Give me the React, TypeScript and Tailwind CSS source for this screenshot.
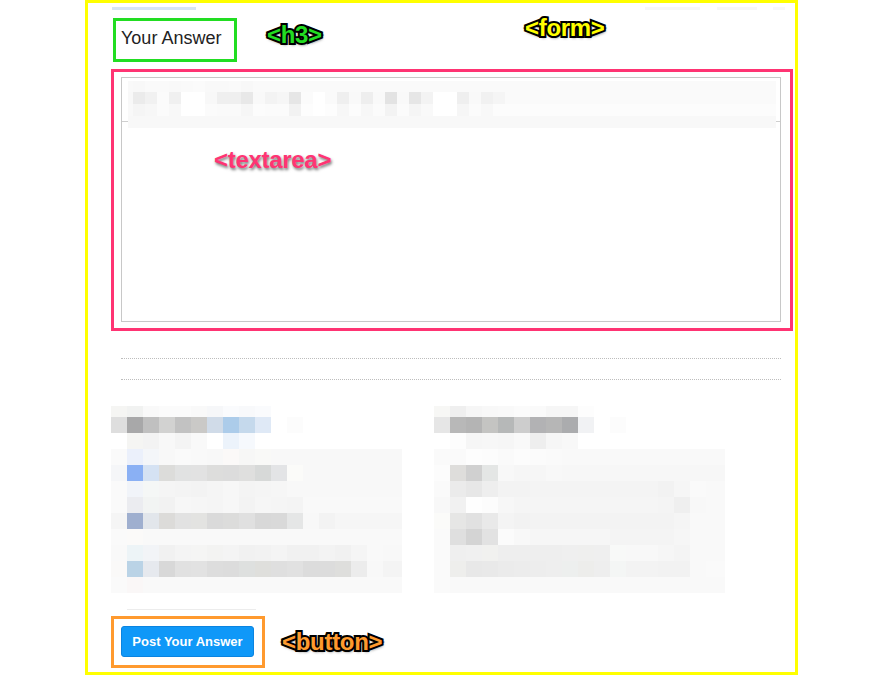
import clsx from "clsx";

type Row = [number, string, string];

function expand(spec: string, fill: string, n: number) {
  const cells = spec ? spec.split(" ") : [];
  while (cells.length < n) cells.push(fill);
  return cells.slice(0, n);
}

// blurred (pixelated) region, one colour per cell
function Mosaic({ cols, rows }: { cols: number[]; rows: Row[] }) {
  return (
    <div className="flex flex-col">
      {rows.map(([h, spec, fill], r) => {
        const cells = expand(spec, fill, cols.length);
        return (
          <div key={r} className="flex">
            {cols.map((w, c) => (
              <div key={c} className="shrink-0" style={{ width: w, height: h, background: `#${cells[c]}` }} />
            ))}
          </div>
        );
      })}
    </div>
  );
}

function Tag({ children, className }: { children: string; className: string }) {
  return (
    <span
      className={clsx(
        "absolute whitespace-nowrap font-bold text-[24px] leading-[24px] tracking-[-0.3px] [paint-order:stroke_fill] [text-shadow:1px_2px_3px_rgba(0,0,0,0.55)]",
        className
      )}
    >
      {children}
    </span>
  );
}

const toolbarCols = [5, ...Array(53).fill(12), 7];
const toolbarRows: Row[] = [
  [11, "f9f9f9 f8f8f8 fafafa fafafa f9f9f9 fafafa fbfbfb f9f9f9 f9f9f9 fafafa f8f8f8 fafafa", "fafafa"],
  [
    12,
    "f8f8f8 ebebeb f1f1f1 fbfbfb f0f0f0 ffffff ffffff f8f8f8 efefef efefef e8e8e8 f9f9f9 f3f3f3 f6f6f6 e6e6e6 fbfbfb ffffff fafafa efefef f9f9f9 eeeeee f9f9f9 e3e3e3 f9f9f9 e6e6e6 f3f3f3 ffffff ffffff efefef f9f9f9 f1f1f1 f5f5f5",
    "fafafa",
  ],
  [
    12,
    "f9f9f9 f5f5f5 f7f7f7 fbfbfb f8f8f8 ffffff ffffff fbfbfb fafafa fafafa f6f6f6 fcfcfc fbfbfb fbfbfb f2f2f2 fdfdfd ffffff fdfdfd f7f7f7 fcfcfc f7f7f7 fbfbfb f3f3f3 fbfbfb f5f5f5 f9f9f9 ffffff ffffff f6f6f6 fbfbfb f8f8f8 fcfcfc",
    "fcfcfc",
  ],
  [12, "", "f8f8f8"],
];

const blockCols = [...Array(18).fill(16), 3];

const leftRows: Row[] = [
  [11, "f5f5f3 f1f2f1 f9f9f9 fbfbfb fbfbfb f9f9f9 f6f7f9 fafbfd f8f9fb fafbfd", "ffffff"],
  [16, "dedede a8a8a9 c0c0c0 d2d2d1 c2c2c2 cac9c7 d0dbe8 acccea c5d9ec dfe9f6 ffffff fcfcfc", "ffffff"],
  [16, "ffffff f5f5f3 f3f3f3 f8f8f8 f4f4f4 f9f9f9 ffffff ecf3fb f6f9fd", "ffffff"],
  [16, "fafafa ebf0fb f4f6f9 f8f8f8 fafafa f9f9f9 f8f8f8 fbf9f8 f7f7f6 f9f9f7", "f8f8f8"],
  [16, "f5f6f8 8ab0f4 d5e2f3 dcdcda e1e2e2 e2e2e2 dddddc dcdcdc dfdfde d7d9d8 e3e4e6 fbfbf9", "f8f8f8"],
  [16, "fafafa f1f4f9 f5f7f6 f5f5f5 f4f4f4 f3f3f3 f5f5f5 f7f7f7 f4f4f4 f5f5f5 f6f6f6", "f8f8f8"],
  [16, "fafafa ebecf0 f2f4f3 f2f2f2 f7f7f7 f6f6f6 f5f5f5 f7f7f7 f3f3f3 f6f6f6 f5f5f5 f4f4f4", "f9f9f9"],
  [16, "f5f5f5 9fafcf e2e6eb dcdbd9 e2e2e2 e3e3e1 dadada dcdcdb e0e0e0 d8d8d8 d9d9d9 e5e6e6 f8f8f8 f3f3f3", "f6f6f6"],
  [16, "fafafa fbfaf9", "f9f9f9"],
  [16, "f9f9f9 edf4f7 f2f4f7 f1f1f1 f4f4f4 f5f5f4 f3f3f2 f4f4f4 f1f1f1 f2f2f2 f4f4f4 f1f1f1 f1f1f1 f3f3f3 f1f1f1 f5f5f5 f9f9f9 f8f8f8", "f8f8f8"],
  [16, "faf9f8 bad3e6 e6e9ee d8d8d8 e1e1e1 e2e2e2 dddddd dcdcdc dee0df dfdfdc dfdfdf e1e1e1 dcdcdc dcdcdc dededc ececec f8f8f8 f4f4f4", "f4f4f4"],
  [16, "fafafa faf7f7", "f9f9f9"],
];

const rightRows: Row[] = [
  [11, "f7f7f5 efefef f6f6f6 f8f8f8 f9f9f9 fbfbfb fafafa f6f6f6 f6f6f6 fdfdfd", "ffffff"],
  [16, "e6e6e6 b8b8b8 b4b4b4 c4c4c2 b6b8b8 cdcdcd b2b2b4 b6b6b6 abacae f1f2f4 ffffff fcfcfc", "ffffff"],
  [16, "ffffff fdfdfd f6f6f6 f7f7f7 f6f6f6 f9f9f9 eeeeee f6f6f6 f8f8f8", "ffffff"],
  [16, "fafafa fafafa fdfdfd fcfcfc fafafa fcfcfc fbfbfb fafafa", "f9f9f9"],
  [16, "fcfcfc dedddb d0d0d0 e4e6e5 f8f8f8 f6f6f6 f6f6f6 f8f8f8", "f7f7f7"],
  [16, "fafafa ebebeb e7e7e7 eeeeee f3f3f3 f3f3f3 f4f4f4 f4f4f4 f4f4f4 f4f4f4 f4f4f4 f4f4f4 f4f4f4 f4f4f4 f2f2f2 f6f6f6 fafafa", "f9f9f9"],
  [16, "f8f8f8 f1f1f1 fefefe fcfcfc f7f7f7 f5f5f5 f5f5f5 f5f5f5 f5f5f5 f5f5f5 f5f5f5 f5f5f5 f5f5f5 f5f5f5 f4f4f4 efefef f8f8f8", "f9f9f9"],
  [16, "fbfbf9 e6e6e5 e1e1e1 e9e9e9 f4f4f4 f2f2f2 f3f3f3 f3f3f3 f3f3f3 f3f3f3 f3f3f3 f3f3f3 f3f3f3 f3f3f3 f3f3f3 f5f5f5 f9f9f9", "f9f9f9"],
  [16, "fafafa dfdfdf d4d4d4 e2e2e2 fbfbfb f8f8f8 f6f6f6 f6f6f6 f6f6f6 f6f6f6 f6f6f6 f4f4f4 f4f4f4 f4f4f4 f4f4f4 f6f6f6 f9f9f9", "f9f9f9"],
  [16, "fafafa efefef f0f0f0 f1f1ef eeeeee eeeeee eeeeee eeeeee efefef efefee efefef f8f9f8 f8f8f8 f8f8f8 f6f6f6 f4f4f4 f9f9f9", "f9f9f9"],
  [16, "fafafa eeeeec e8e8e8 e9e9e9 ebebeb ececec ededed eeeeee edefee ededeb eeeeee f4f6f5 f3f3f3 f3f3f3 f2f2f2 f2f2f2 f9f9f9", "fafafa"],
  [16, "fafafa", "f9f9f9"],
];

export default function App() {
  return (
    <div className="relative w-[870px] h-[677px] overflow-hidden bg-white font-['Liberation_Sans',Arial,sans-serif]">
      <form className="ml-[85px] flex h-[675px] w-[713px] flex-col border-[3px] border-[#ffff00]">
        <div className="mt-[4px] flex h-[3px]">
          <div className="ml-[24px] w-[84px] bg-[#d8e5f3]" />
          <div className="ml-[449px] w-[55px] bg-[#f7f7f7]" />
          <div className="ml-[17px] w-[40px] bg-[#f7f7f7]" />
          <div className="ml-[16px] w-[12px] bg-[#f8f8f8]" />
        </div>

        <h3 className="mt-[8px] ml-[25px] h-[44px] w-[124px] border-[3px] border-[#22dd22] pl-[5px] pt-[8px] text-[18px] leading-[18px] font-normal text-[#222]">
          Your Answer
        </h3>

        <div className="mt-[7px] ml-[23px] h-[262px] w-[682px] border-[3px] border-[#ff3473] pl-[7px] pt-[5px]">
          <div className="h-[245px] w-[660px] border border-[#c8c8c8]">
            <div className="relative h-[44px] border-b border-[#cfcfcf]">
              <div className="absolute left-[6px] top-[3px]">
                <Mosaic cols={toolbarCols} rows={toolbarRows} />
              </div>
            </div>
          </div>
        </div>

        <div className="mt-[27px] ml-[33px] w-[660px] border-t border-dotted border-[#bdbdbd]" />
        <div className="mt-[20px] ml-[33px] w-[660px] border-t border-dotted border-[#bdbdbd]" />

        <div className="mt-[26px] ml-[23px] flex gap-[32px]">
          <Mosaic cols={blockCols} rows={leftRows} />
          <Mosaic cols={blockCols} rows={rightRows} />
        </div>

        <div className="mt-[16px] ml-[39px] h-px w-[129px] bg-[#ececec]" />

        <div className="mt-[6px] ml-[23px] h-[52px] w-[154px] border-[3px] border-[#ff9a2e] pl-[7px] pt-[7px]">
          <button
            type="button"
            className="flex h-[31px] w-[133px] items-center justify-center rounded-[3px] border border-[#0b84e0] bg-[#0f98f8] text-[13px] font-bold text-white"
          >
            Post Your Answer
          </button>
        </div>
      </form>

      <Tag className="left-[267px] top-[23px] text-[#22dd22] [-webkit-text-stroke:4px_#000]">{"<h3>"}</Tag>
      <Tag className="left-[525px] top-[16px] text-[#ffff00] [-webkit-text-stroke:4px_#000]">{"<form>"}</Tag>
      <Tag className="left-[214px] top-[148px] text-[#ff3473] [-webkit-text-stroke:4px_#fff]">{"<textarea>"}</Tag>
      <Tag className="left-[282px] top-[630px] text-[#ff9a2e] [-webkit-text-stroke:4px_#000]">{"<button>"}</Tag>
    </div>
  );
}
